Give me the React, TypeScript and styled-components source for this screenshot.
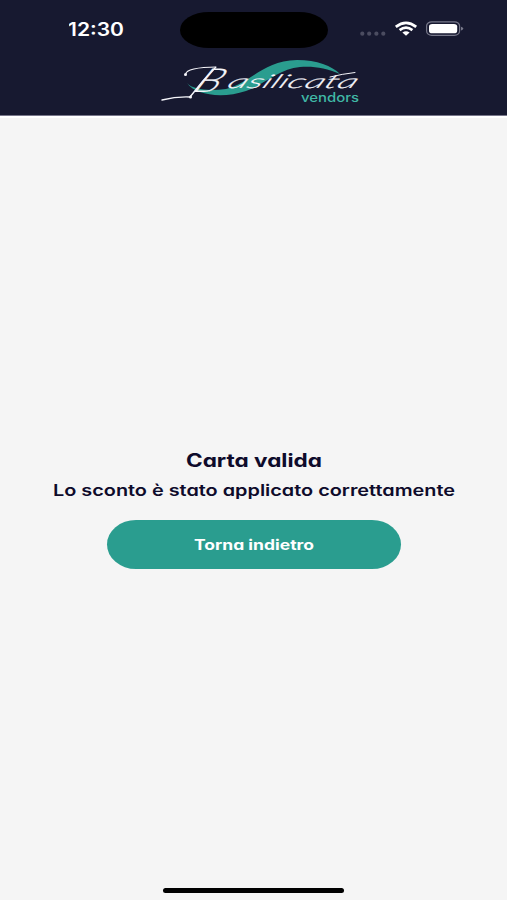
import React from 'react';
import styled, { createGlobalStyle } from 'styled-components';

const GlobalStyle = createGlobalStyle`
  * { box-sizing: border-box; }
  body { margin: 0; background: #f5f5f5; }
`;

const Screen = styled.div`
  width: 100%;
  height: 900px;
  display: flex;
  flex-direction: column;
  overflow: hidden;
  background: #f5f5f5;
  color: #0e0b2b;
  font-family: Inter, 'Liberation Sans', sans-serif;
  font-feature-settings: 'cv11' 1, 'ss03' 1;
`;

const Header = styled.header`
  height: 116px;
  flex: none;
  background: #171930;
  border-bottom: 1px solid #77768a;
  box-shadow: 0 2px 0 #fff;
`;

const StatusBar = styled.div`
  height: 58px;
  display: grid;
  grid-template-columns: 180px 148px 1fr;
  align-items: center;
`;

const Time = styled.svg`
  display: block;
  width: 56px;
  height: 24px;
  margin-left: 69px;
`;

const Island = styled.div`
  height: 36px;
  margin-top: 1px;
  border-radius: 29px / 18px;
  background: #000;
`;

const StatusIcons = styled.svg`
  display: block;
  width: 110px;
  height: 24px;
  margin-left: 29px;
`;

const Logo = styled.svg`
  display: block;
  width: 204px;
  height: 48px;
  margin-left: 158px;
`;

const Content = styled.main`
  flex: 1;
  display: flex;
  flex-direction: column;
  align-items: center;
  padding-top: 330px;
`;

const Line = styled.svg<{ $height: number }>`
  display: block;
  width: 420px;
  height: ${({ $height }) => $height}px;
  flex: none;
  overflow: visible;
`;

const Label = styled.text<{ $size: number; $weight: number }>`
  font-size: ${({ $size }) => $size}px;
  font-weight: ${({ $weight }) => $weight};
  fill: currentColor;
`;

const BackButton = styled.button`
  width: 294px;
  height: 49px;
  margin-top: 15px;
  padding: 0;
  display: flex;
  justify-content: center;
  align-items: center;
  border: 0;
  border-radius: 29px / 24.5px;
  background: #2a9d8f;
  color: #fff;
  font: inherit;
  font-feature-settings: inherit;
`;

const HomeIndicator = styled.div`
  width: 181px;
  height: 5px;
  flex: none;
  align-self: center;
  margin-bottom: 7.5px;
  border-radius: 3px;
  background: #000;
`;

type FittedProps = { children: string; width: number; size: number; weight: number; height: number; baseline: number };

function FittedText({ children, width, size, weight, height, baseline }: FittedProps) {
  return (
    <Line $height={height} viewBox={`0 0 420 ${height}`}>
      <Label x={210 - width / 2} y={baseline} $size={size} $weight={weight} textLength={width} lengthAdjust="spacingAndGlyphs">
        {children}
      </Label>
    </Line>
  );
}

export default function App() {
  return (
    <Screen>
      <GlobalStyle />
      <Header>
        <StatusBar>
          <Time viewBox="0 0 56 24">
            <text x="-1" y="19" fill="#fff" fontSize="18" fontWeight="600" textLength="56" lengthAdjust="spacingAndGlyphs">12:30</text>
          </Time>
          <Island />
          <StatusIcons viewBox="357 17 110 24">
            <g fill="#4b4c60">
              <circle cx="362.3" cy="33.7" r="2.1" />
              <circle cx="369.2" cy="33.7" r="2.1" />
              <circle cx="376.4" cy="33.7" r="2.1" />
              <circle cx="383.3" cy="33.7" r="2.1" />
            </g>
            <g fill="none" stroke="#fff" strokeWidth="2.7">
              <path d="M395.8 26.9Q406 18.8 416.2 26.9" />
              <path d="M399.6 30.1Q406 25.2 412.4 30.1" />
            </g>
            <path d="M402.4 32.5Q406 29.9 409.6 32.5L406 35.7Z" fill="#fff" />
            <rect x="426.6" y="21.8" width="33" height="13.6" rx="5.2" ry="4.3" fill="none" stroke="#77788a" strokeWidth="1.2" />
            <rect x="429" y="24" width="28.2" height="9.3" rx="3.3" ry="2.6" fill="#fff" />
            <path d="M461 26.7Q463.2 27.2 463.2 28.6T461 30.6Z" fill="#77788a" />
          </StatusIcons>
        </StatusBar>
        <Logo viewBox="158 58 204 48">
          <path
            d="M187 83C193 90 209 91 226 89C251 83 262 61 297 60C317 60 332 66 340 74C326 68 314 66 300 67C279 69 265 84 246 91C222 99 195 95 187 83Z"
            fill="#2a9d8f"
          />
          <g fill="none" stroke="#f5f5fa" strokeLinecap="round">
            <path d="M190 97C179 96.5 170 98 162 100" strokeWidth="1.3" />
            <path d="M186 74C185 70 198 67 216 67" strokeWidth="1.2" />
            <path d="M330 77Q342 74 355 72.5" strokeWidth="1" />
            <path d="M215.5 67.5Q202 81 190 97" strokeWidth="1.4" />
          </g>
          <circle cx="185.5" cy="74.4" r="1.5" fill="#f5f5fa" />
          <circle cx="190.5" cy="97" r="1.5" fill="#f5f5fa" />
          <g fill="#f5f5fa" stroke="#f5f5fa" strokeWidth="0.2" fontFamily="Lato, sans-serif" fontStyle="italic" fontWeight="300">
            <text transform="translate(191.5 91.5) skewX(-32)" fontSize="33" textLength="25" lengthAdjust="spacingAndGlyphs">B</text>
            <text transform="translate(226 88.3) skewX(-28)" fontSize="19" textLength="129" lengthAdjust="spacingAndGlyphs">asilicata</text>
          </g>
          <text x="301" y="101.5" fill="#40b8a6" fontSize="12.4" fontWeight="500" textLength="58" lengthAdjust="spacingAndGlyphs">vendors</text>
        </Logo>
      </Header>
      <Content>
        <FittedText width={136} size={18.4} weight={700} height={30} baseline={21}>Carta valida</FittedText>
        <FittedText width={402} size={16} weight={600} height={29} baseline={20}>Lo sconto è stato applicato correttamente</FittedText>
        <BackButton type="button">
          <FittedText width={120} size={14.4} weight={700} height={24} baseline={16.5}>Torna indietro</FittedText>
        </BackButton>
      </Content>
      <HomeIndicator />
    </Screen>
  );
}
